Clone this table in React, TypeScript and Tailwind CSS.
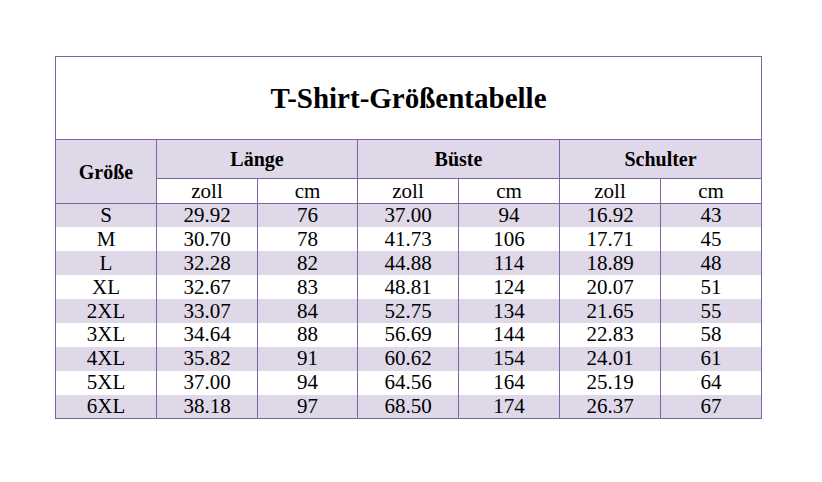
import React from "react";

const rows: [string, string, string, string, string, string, string][] = [
  ["S", "29.92", "76", "37.00", "94", "16.92", "43"],
  ["M", "30.70", "78", "41.73", "106", "17.71", "45"],
  ["L", "32.28", "82", "44.88", "114", "18.89", "48"],
  ["XL", "32.67", "83", "48.81", "124", "20.07", "51"],
  ["2XL", "33.07", "84", "52.75", "134", "21.65", "55"],
  ["3XL", "34.64", "88", "56.69", "144", "22.83", "58"],
  ["4XL", "35.82", "91", "60.62", "154", "24.01", "61"],
  ["5XL", "37.00", "94", "64.56", "164", "25.19", "64"],
  ["6XL", "38.18", "97", "68.50", "174", "26.37", "67"],
];

export default function App() {
  return (
    <div className="w-[822px] h-[482px] bg-white pt-[56px] pl-[55px] font-['Liberation_Serif','Times_New_Roman',serif] text-black">
      <table className="border-collapse table-fixed w-[706px] border border-[#8064a2]">
        <colgroup>
          <col className="w-[101px]" />
          <col className="w-[101px]" />
          <col className="w-[100px]" />
          <col className="w-[101px]" />
          <col className="w-[101px]" />
          <col className="w-[101px]" />
          <col className="w-[101px]" />
        </colgroup>
        <thead>
          <tr>
            <th
              colSpan={7}
              className="h-[83px] p-0 border border-[#8064a2] text-[29px] font-bold leading-none text-center align-middle"
            >
              T-Shirt-Größentabelle
            </th>
          </tr>
          <tr className="bg-[#dfd8e9]">
            <th
              rowSpan={2}
              className="p-0 border border-[#8064a2] text-[20px] font-bold leading-none text-center align-middle"
            >
              Größe
            </th>
            <th colSpan={2} className="h-[39px] p-0 border border-[#8064a2] text-[20px] font-bold leading-none text-center align-middle">
              Länge
            </th>
            <th colSpan={2} className="h-[39px] p-0 border border-[#8064a2] text-[20px] font-bold leading-none text-center align-middle">
              Büste
            </th>
            <th colSpan={2} className="h-[39px] p-0 border border-[#8064a2] text-[20px] font-bold leading-none text-center align-middle">
              Schulter
            </th>
          </tr>
          <tr className="bg-white">
            {["zoll", "cm", "zoll", "cm", "zoll", "cm"].map((t, i) => (
              <th
                key={i}
                className="h-[25px] p-0 border border-[#8064a2] text-[21px] font-normal leading-none text-center align-middle"
              >
                {t}
              </th>
            ))}
          </tr>
        </thead>
        <tbody>
          {rows.map((r, i) => (
            <tr key={r[0]} className={i % 2 === 0 ? "bg-[#dfd8e9]" : "bg-white"}>
              {r.map((c, j) => (
                <td
                  key={j}
                  className="h-[23.9px] p-0 border-x border-[#8064a2] text-[21px] leading-none text-center align-middle"
                >
                  {c}
                </td>
              ))}
            </tr>
          ))}
        </tbody>
      </table>
    </div>
  );
}
